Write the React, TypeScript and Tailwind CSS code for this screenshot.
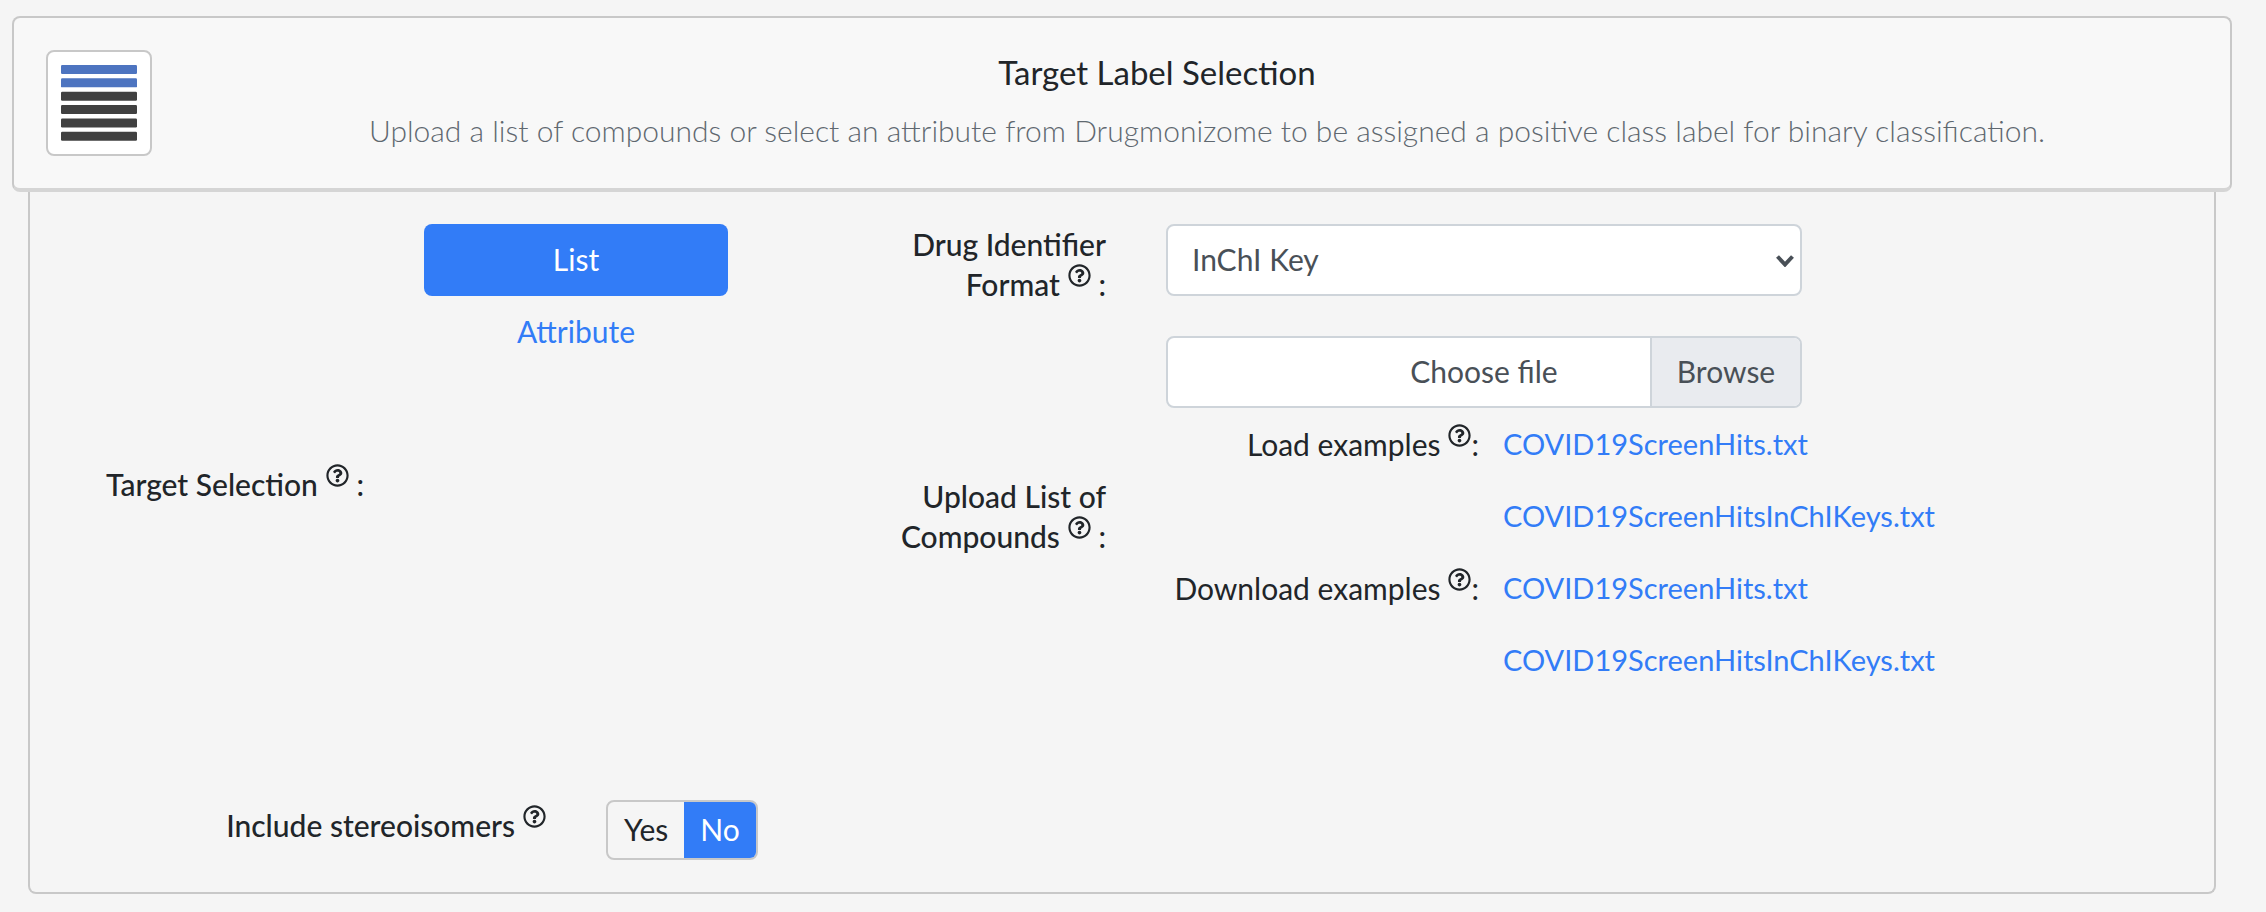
import { useState } from 'react';
import { FaRegQuestionCircle } from 'react-icons/fa';

function Help() {
  return (
    <button type="button" aria-label="Help" className="ml-2 inline-flex -translate-y-[9px] align-baseline">
      <FaRegQuestionCircle className="size-[23px]" />
    </button>
  );
}

function TargetIcon() {
  return (
    <div className="flex size-[106px] shrink-0 items-center justify-center rounded-lg border-2 border-[#c8c8c8] bg-white">
      <svg viewBox="0 0 76 76" className="size-[76px]" aria-hidden="true">
        {[0, 1, 2, 3, 4, 5].map((i) => (
          <rect key={i} x="0" y={i * 13.35} width="76" height="9" rx="1.2" fill={i < 2 ? '#4d74c0' : '#404040'} />
        ))}
      </svg>
    </div>
  );
}

function Examples({ label }: { label: string }) {
  return (
    <div className="grid grid-cols-[minmax(0,313fr)_minmax(0,299fr)] gap-6 leading-[72px]">
      <div className="flex justify-end whitespace-nowrap">
        <div>
          {label}
          <Help />:
        </div>
      </div>
      <div className="flex flex-col items-start text-[29px] whitespace-nowrap text-[#327cf7]">
        <a href="#hits">COVID19ScreenHits.txt</a>
        <a href="#keys">COVID19ScreenHitsInChIKeys.txt</a>
      </div>
    </div>
  );
}

export default function App() {
  const [mode, setMode] = useState('List');
  const [stereo, setStereo] = useState('No');
  return (
    <main className="min-h-screen bg-[#f5f5f5] pt-4 pr-[34px] pb-[18px] pl-3 font-['Lato','Noto_Sans',sans-serif] text-[30px] leading-10 text-[#212529]">
      <header className="flex items-start rounded-lg border-2 border-b-4 border-[#c8c8c8] border-b-[#d5d5d5] bg-[#f8f8f8] px-8 py-8">
        <TargetIcon />
        <div className="flex-1 text-center">
          <h1 className="pt-0.5 pr-9 text-[33px]">Target Label Selection</h1>
          <p className="mt-[18px] pl-16 font-light text-[#5f6870]">
            Upload a list of compounds or select an attribute from Drugmonizome to be assigned a positive class label for
            binary classification.
          </p>
        </div>
      </header>

      <section className="mx-4 rounded-b-lg border-2 border-t-0 border-[#c8c8c8] py-8">
        <div className="grid grid-cols-[minmax(0,334fr)_minmax(0,304fr)_minmax(0,318fr)_minmax(0,636fr)_minmax(0,352fr)] gap-x-[60px] pb-12">
          <div className="row-span-2 -mb-12 self-center text-right font-medium whitespace-nowrap">
            Target Selection
            <Help /> :
          </div>
          <div className="row-span-2 flex flex-col">
            {['List', 'Attribute'].map((name) => (
              <button
                key={name}
                type="button"
                onClick={() => setMode(name)}
                className={
                  mode === name
                    ? 'h-[72px] rounded-lg bg-[#327cf7] pb-0.5 text-white'
                    : 'h-[72px] rounded-lg pb-0.5 text-[#327cf7]'
                }
              >
                {name}
              </button>
            ))}
          </div>

          <label htmlFor="format" className="text-right font-medium">
            Drug Identifier
            <br />
            Format
            <Help /> :
          </label>
          <div className="relative mb-10 h-[72px]">
            <select
              id="format"
              className="size-full appearance-none rounded-lg border-2 border-[#ced4da] bg-white px-6 pb-0.5 text-[#495057]"
            >
              <option>InChI Key</option>
              <option>Drug Name</option>
              <option>SMILES</option>
            </select>
            <svg
              viewBox="0 0 18 12"
              className="pointer-events-none absolute top-[31px] right-2 h-3 w-[18px]"
              fill="none"
              stroke="#495057"
              strokeWidth="4"
              aria-hidden="true"
            >
              <path d="M1.5 1.5 9 9.5l7.500-8" />
            </svg>
          </div>
          <div aria-hidden="true" />

          <label htmlFor="upload" className="self-center text-right font-medium">
            Upload List of
            <br />
            Compounds
            <Help /> :
          </label>
          <div>
            <label className="flex h-[72px] items-stretch overflow-hidden rounded-lg border-2 border-[#ced4da] bg-white pl-[150px] leading-[66px] text-[#495057]">
              <input id="upload" type="file" className="sr-only" />
              <span className="flex-1 text-center">Choose file</span>
              <span className="w-[150px] border-l-2 border-[#ced4da] bg-[#e9ebef] text-center">Browse</span>
            </label>
            <Examples label="Load examples" />
            <Examples label="Download examples" />
          </div>
        </div>

        <div className="mt-14 grid grid-cols-[minmax(0,516fr)_minmax(0,1608fr)] gap-x-[60px]">
          <div className="text-right leading-[50px] font-medium whitespace-nowrap">
            Include stereoisomers
            <Help />
          </div>
          <div className="flex h-[60px] w-fit overflow-hidden rounded-lg border-2 border-[#c8c8c8]">
            {['Yes', 'No'].map((name) => (
              <button
                key={name}
                type="button"
                onClick={() => setStereo(name)}
                className={stereo === name ? 'bg-[#327cf7] px-4 pb-0.5 text-white' : 'px-4 pb-0.5'}
              >
                {name}
              </button>
            ))}
          </div>
        </div>
      </section>
    </main>
  );
}
